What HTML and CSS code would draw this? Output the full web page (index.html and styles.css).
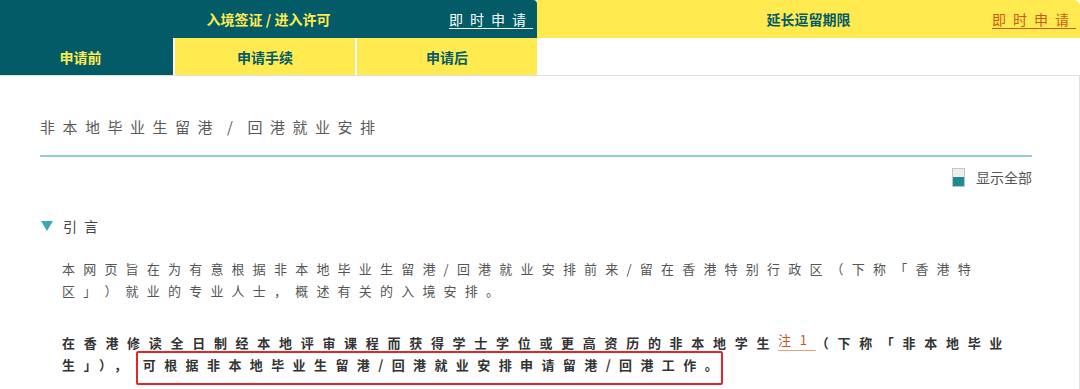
FILE: index.html
```html
<!DOCTYPE html>
<html>
  <head>
    <meta http-equiv="Content-Type" content="text/html; charset=utf-8"/>
    <title>非本地毕业生留港 / 回港就业安排</title>
    <link rel="stylesheet" href="styles.css">
  </head>
  <body>
  <div class="page">

    <div class="nav">
      <div class="nav_left">
        <div class="nav_head head_teal">
          <span></span>
          <span class="nav_title">入境签证 / 进入许可</span>
          <a class="apply apply_white" href="#">即时申请</a>
        </div>
        <div class="tabs">
          <div class="tab tab_active">申请前</div>
          <div class="tab">申请手续</div>
          <div class="tab">申请后</div>
        </div>
      </div>
      <div class="nav_right">
        <div class="nav_head head_yellow">
          <span></span>
          <span class="nav_title">延长逗留期限</span>
          <a class="apply apply_orange" href="#">即时申请</a>
        </div>
      </div>
    </div>

    <div class="content">
      <div class="page_title">非本地毕业生留港<span class="slash">/</span>回港就业安排</div>

      <div class="show_all">
        <span class="show_icon"></span>
        <span>显示全部</span>
      </div>

      <div class="section_head">
        <span class="arrow"></span>
        <span>引言</span>
      </div>

      <p class="para">本网页旨在为有意根据非本地毕业生留港/回港就业安排前来/留在香港特别行政区（下称「香港特区」）就业的专业人士，概述有关的入境安排。</p>

      <p class="para para_strong">在香港修读全日制经本地评审课程而获得学士学位或更高资历的非本地学生<a class="note" href="#">注1</a>（下称「非本地毕业生」），<span class="mark">可根据非本地毕业生留港/回港就业安排申请留港/回港工作<span class="last">。</span></span></p>
    </div>

  </div>
  </body>
</html>
```

FILE: styles.css
```css
body { margin: 0; font-family: "Noto Sans CJK SC", "Noto Sans", sans-serif; background: #fff; overflow: hidden; }
div.page { width: 1080px; }

/* top navigation */
div.nav { display: flex; height: 75px; }
div.nav_left { width: 537px; display: flex; flex-direction: column; }
div.nav_right { flex: 1; }

div.nav_head {
  height: 38px;
  display: grid;
  grid-template-columns: 1fr auto 1fr;
  align-items: center;
  font-size: 14px;
}
div.head_teal { background: #035b67; color: #ffea4f; border-top-right-radius: 4px; }
div.head_yellow { background: #ffeb50; color: #035b67; border-top-right-radius: 6px; }
span.nav_title { font-weight: bold; }

a.apply {
  justify-self: end;
  margin-right: 4px;
  letter-spacing: 0.5em;
  text-decoration: underline;
  text-underline-offset: 3px;
}
a.apply_white { color: #ffffff; }
a.apply_orange { color: #c95a16; }

div.tabs {
  flex: 1;
  display: grid;
  grid-template-columns: 173px 180px 1fr;
  column-gap: 2px;
}
div.tab {
  background: #ffeb50;
  color: #035b67;
  font-size: 14px;
  font-weight: bold;
  display: flex;
  align-items: center;
  justify-content: center;
}
div.tab_active { background: #035b67; color: #ffea4f; padding-right: 12px; }

/* content box */
div.content {
  box-sizing: border-box;
  height: 314px;
  border: 1px solid #e0e0e0;
  border-left-width: 0;
  border-bottom-width: 0;
  padding: 40px 47px 0 40px;
}

div.page_title {
  font-size: 15px;
  line-height: 22px;
  letter-spacing: 0.5em;
  color: #5a5a5a;
  padding-bottom: 17px;
  border-bottom: 2px solid #92cdd1;
}
span.slash { margin: 0 7px; }

div.show_all {
  display: flex;
  justify-content: flex-end;
  align-items: center;
  gap: 11px;
  margin-top: 10px;
  font-size: 14px;
  line-height: 20px;
  color: #555;
}
span.show_icon {
  width: 11px;
  height: 17px;
  border: 1px solid #c4c4c4;
  background: linear-gradient(#e9eef3 45%, #1c8b95 45%);
}

div.section_head {
  display: flex;
  align-items: center;
  gap: 10px;
  margin-top: 29px;
  font-size: 14px;
  line-height: 20px;
  letter-spacing: 0.5em;
  color: #444;
}
span.arrow {
  width: 0;
  height: 0;
  border-left: 6px solid transparent;
  border-right: 6px solid transparent;
  border-top: 10px solid #3aa8b9;
  margin-left: 1px;
}

p.para {
  margin: 22px 10px 0 22px;
  font-size: 13px;
  line-height: 22px;
  letter-spacing: 8.2px;
  text-spacing-trim: space-all;
  color: #555;
}
p.para_strong {
  margin-top: 30px;
  letter-spacing: 8.7px;
  text-spacing-trim: normal;
  color: #333;
  font-weight: bold;
}

a.note {
  color: #c5561a;
  font-weight: normal;
  position: relative;
  top: -3px;
  text-decoration: underline;
  text-decoration-color: #e2a07a;
  text-underline-offset: 5px;
}

span.mark {
  border: 2px solid #e3262b;
  border-radius: 2px;
  padding: 2px 3px 9px 5px;
  letter-spacing: 8.4px;
}
span.last { letter-spacing: 0; }
```
